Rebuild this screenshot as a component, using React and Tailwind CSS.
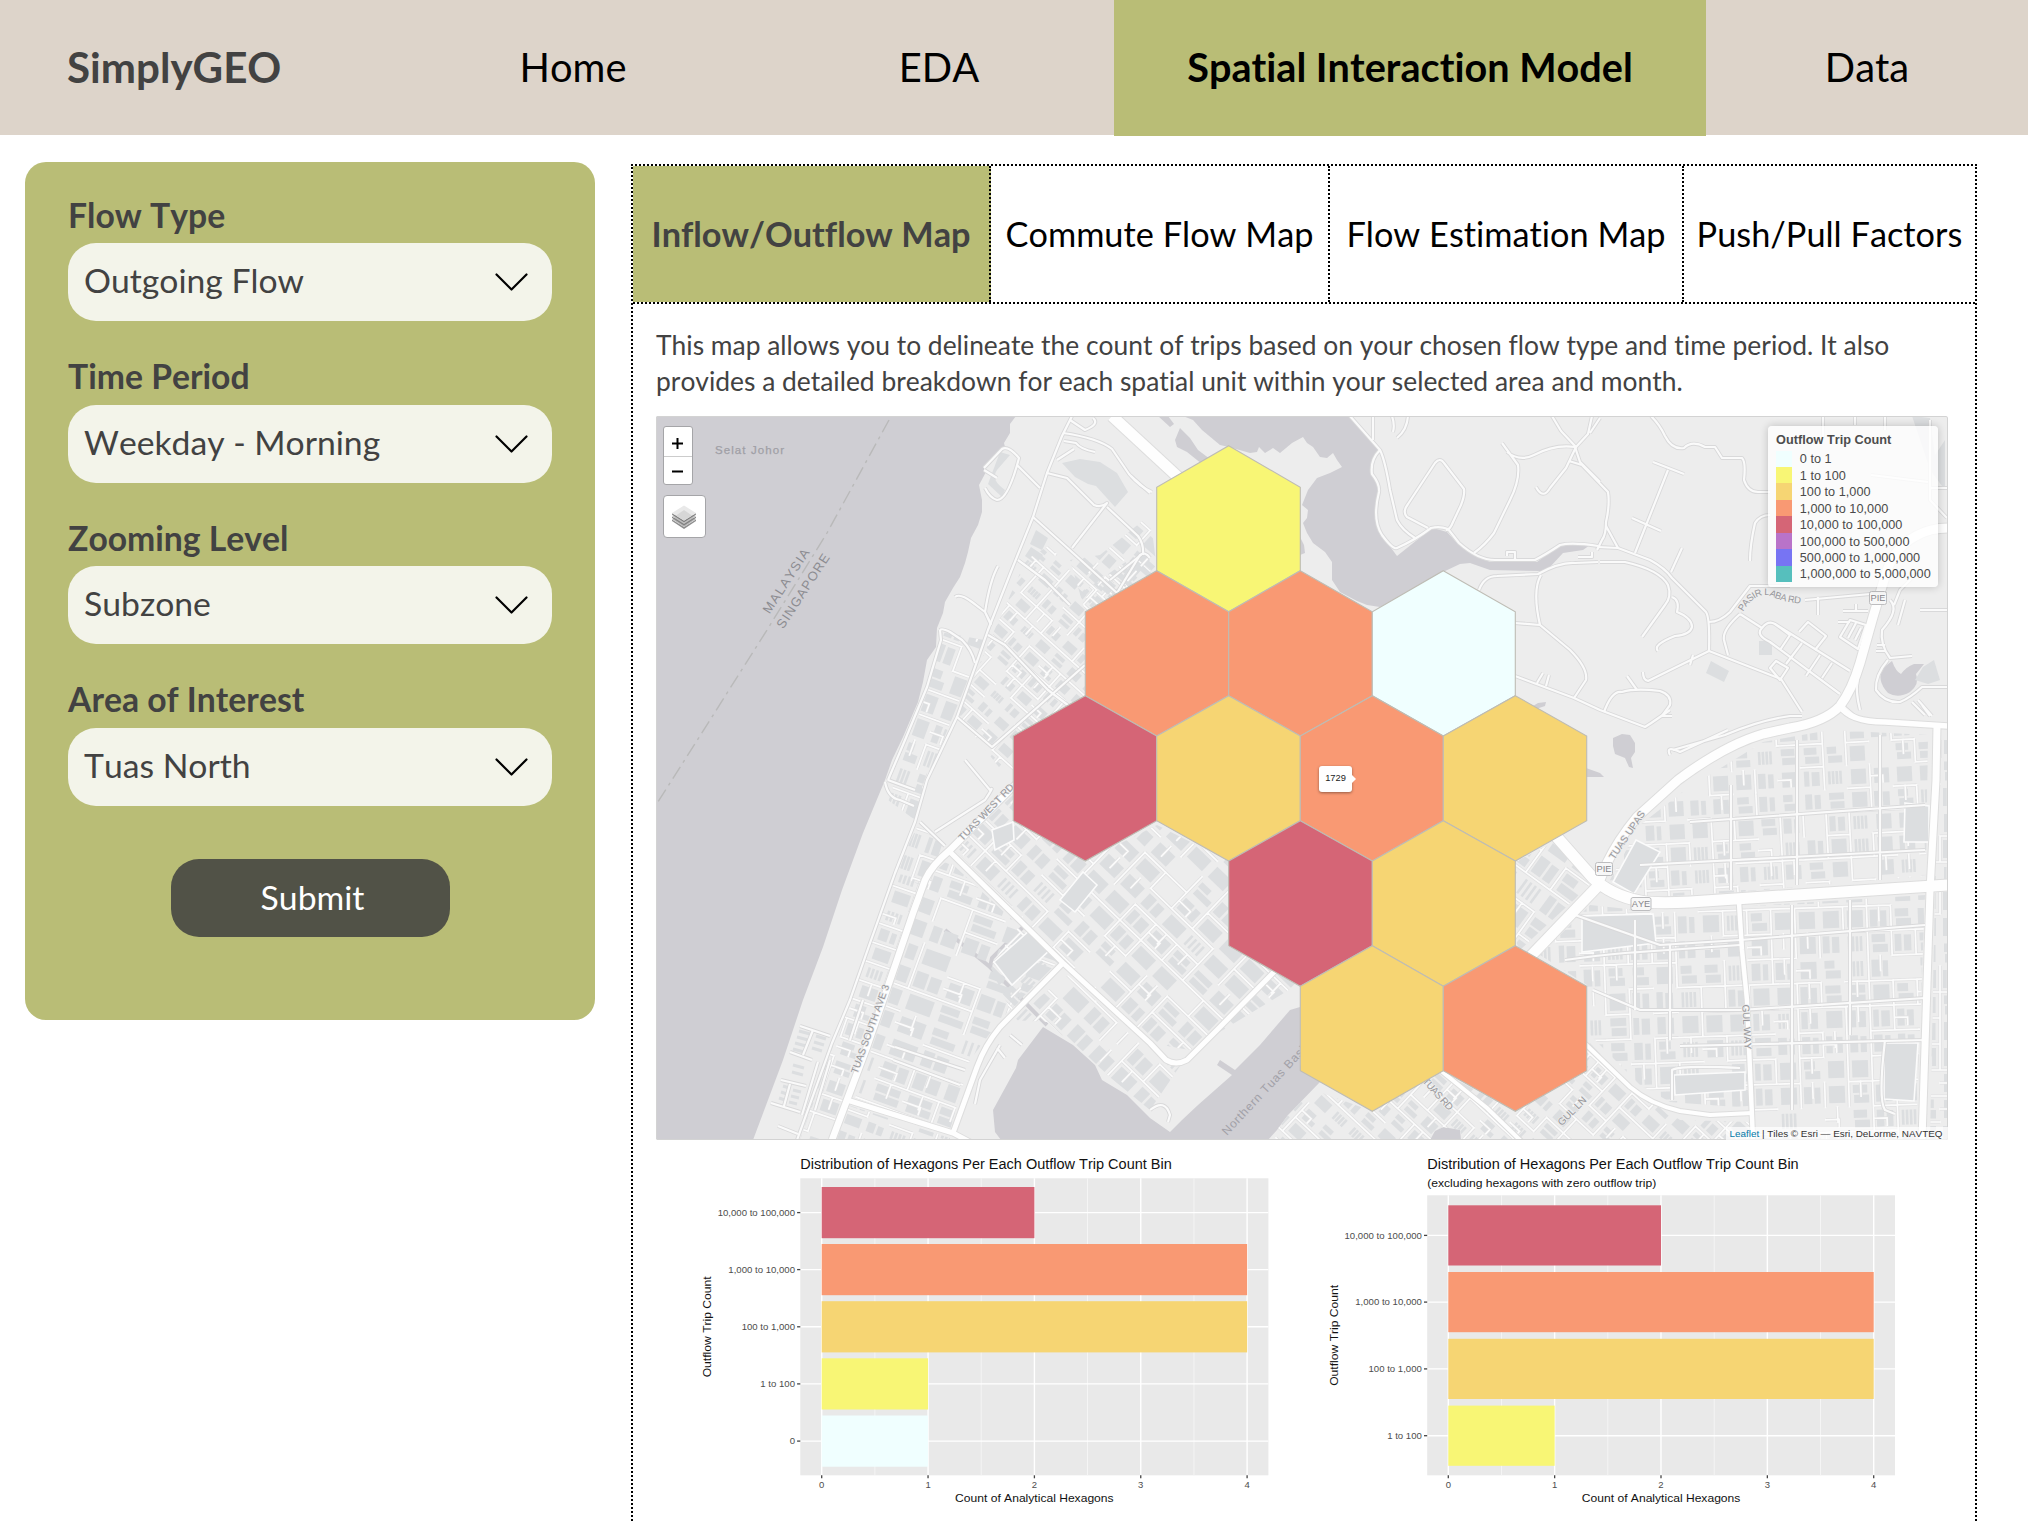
import React from "react";

const COLORS = {
  azure: "#f0ffff",
  yellow: "#f8f675",
  gold: "#f6d573",
  orange: "#f99973",
  rose: "#d56576",
  purple: "#b973c9",
  blue: "#7774f3",
  teal: "#56bfbd",
};

/* ---------- navigation ---------- */

function Nav() {
  return (
    <nav className="flex h-[135px] w-full shrink-0 bg-[#ddd4ca] text-[39.9px] leading-none text-black">
      <div className="flex w-[382px] items-center pb-[1px] pl-[67px] text-[42.1px] font-bold text-[#424242]">SimplyGEO</div>
      <div className="flex w-[382px] items-center justify-center pb-[1px]">Home</div>
      <div className="flex w-[350px] items-center justify-center pb-[1px]">EDA</div>
      <div className="flex h-[136px] w-[592px] items-center justify-center bg-[#b9bd76] pb-[2px] text-[39.6px] font-bold">
        Spatial Interaction Model
      </div>
      <div className="flex w-[322px] items-center justify-center pb-[1px]">Data</div>
    </nav>
  );
}

/* ---------- sidebar ---------- */

function Field({ label, value }) {
  return (
    <div className="flex h-[161.6px] flex-col">
      <div className="flex h-[49px] items-center pb-[6px] text-[33.7px] leading-none font-bold text-[#424242]">{label}</div>
      <div className="flex h-[78px] items-center justify-between rounded-[28px] bg-[#f3f4ea] pr-[24px] pl-4 text-[33.7px] leading-none text-[#424242]">
        <span className="pb-[2px]">{value}</span>
        <svg width="34" height="20" viewBox="0 0 34 20" fill="none" stroke="#000" strokeWidth="2.2" strokeLinecap="round" strokeLinejoin="round">
          <path d="M2.5 2.5 L17.5 17.5 L32.5 2.5" />
        </svg>
      </div>
    </div>
  );
}

function Sidebar() {
  return (
    <aside className="ml-[25px] mt-[27px] flex h-[858px] w-[570px] shrink-0 flex-col rounded-[21px] bg-[#b9bd76] px-[43px] pt-[32px]">
      <Field label="Flow Type" value="Outgoing Flow" />
      <Field label="Time Period" value="Weekday - Morning" />
      <Field label="Zooming Level" value="Subzone" />
      <Field label="Area of Interest" value="Tuas North" />
      <button className="mt-[18.6px] flex h-[78px] w-[279px] items-center justify-center self-center rounded-[28px] bg-[#515247] pb-[1px] pl-[5px] text-[33.7px] leading-none text-white">
        Submit
      </button>
    </aside>
  );
}

/* ---------- base map ---------- */

function rng(seed) {
  let s = seed;
  return () => {
    s = (s * 16807) % 2147483647;
    return s / 2147483647;
  };
}

const DISTRICTS = [
  { id: "a", poly: "1026,560 1050,545 1085,590 1150,545 1150,580 1085,620 1085,700 1013,740 1013,785 958,715 990,640", cx: 1045, cy: 660, r: 130, a: 42, w: 21, h: 17, seed: 11 },
  { id: "c", poly: "941,632 984,640 925,785 915,820 888,800 928,690", cx: 935, cy: 720, r: 110, a: 20, w: 24, h: 26, seed: 21 },
  { id: "d", poly: "895,873 925,880 830,1140 800,1140 832,1043 850,1000 870,943", cx: 860, cy: 980, r: 190, a: 19, w: 25, h: 20, seed: 35 },
  { id: "d2", poly: "918,825 945,845 920,885 895,873", cx: 920, cy: 855, r: 50, a: 19, w: 22, h: 24, seed: 39 },
  { id: "e", poly: "955,850 1013,795 1085,861 1157,825 1228,861 1228,946 1297,985 1190,1050 1150,1043 1065,960", cx: 1120, cy: 920, r: 180, a: 44, w: 29, h: 22, seed: 47 },
  { id: "e2", poly: "1068,975 1150,1050 1180,1066 1150,1110 1095,1065 1047,1022 1010,1020", cx: 1100, cy: 1040, r: 90, a: 44, w: 30, h: 24, seed: 53 },
  { id: "f", poly: "948,860 1058,962 1000,1020 970,1060 950,1130 855,1098 900,965 925,880", cx: 940, cy: 1000, r: 150, a: 20, w: 34, h: 24, seed: 61 },
  { id: "f2", poly: "1020,925 1060,962 1040,990 1010,1010 990,966", cx: 1025, cy: 965, r: 50, a: 45, w: 26, h: 20, seed: 67 },
  { id: "f3", poly: "845,1104 950,1138 950,1142 835,1142", cx: 890, cy: 1125, r: 70, a: 20, w: 24, h: 18, seed: 69 },
  { id: "g", poly: "1685,790 1763,742 1830,730 1928,735 1926,876 1740,892 1640,898 1610,880 1640,825", cx: 1780, cy: 815, r: 190, a: -3, w: 23, h: 23, seed: 71 },
  { id: "h", poly: "1590,905 1655,912 1925,895 1916,1140 1756,1140 1750,1108 1670,1102 1640,1085 1590,1035 1587,985 1540,955", cx: 1750, cy: 1010, r: 240, a: -2, w: 24, h: 25, seed: 83 },
  { id: "i", poly: "1300,1085 1372,1111 1440,1071 1515,1111 1587,1071 1587,1040 1640,1095 1680,1120 1752,1122 1752,1140 1463,1140 1460,1130 1443,1127 1435,1131 1430,1140 1267,1140 1277,1130 1288,1115 1320,1082", cx: 1500, cy: 1100, r: 260, a: 43, w: 23, h: 19, seed: 97 },
  { id: "j", poly: "1515,862 1558,840 1590,885 1520,950 1515,940", cx: 1550, cy: 890, r: 70, a: 36, w: 30, h: 27, seed: 103 },
  { id: "k", poly: "1938,740 1948,740 1948,1140 1930,1140", cx: 1940, cy: 940, r: 210, a: 0, w: 20, h: 26, seed: 109 },
  { id: "b", poly: "1070,560 1100,555 1150,515 1157,570 1085,611", cx: 1110, cy: 575, r: 60, a: 42, w: 34, h: 20, seed: 113 },
];

function District({ id, poly, cx, cy, r, a, w, h, seed }) {
  const rand = rng(seed * 7919);
  const blds = [];
  let roads = "";
  const nx = Math.ceil(r / w);
  const ny = Math.ceil(r / h);
  for (let i = -nx; i < nx; i++) {
    for (let j = -ny; j < ny; j++) {
      const x = i * w;
      const y = j * h;
      const k = rand();
      if (k < 0.32) {
        blds.push([x + 4, y + 4, w - 8, h - 8]);
      } else if (k < 0.62) {
        const s = (0.35 + rand() * 0.25) * (w - 7);
        blds.push([x + 3, y + 4, s - 1, h - 8]);
        blds.push([x + 4.5 + s, y + 5, w - 9 - s, h - 9]);
      } else if (k < 0.82) {
        const s = (h - 9) / 2;
        blds.push([x + 4, y + 3.5, (w - 8) * (0.6 + rand() * 0.4), s]);
        blds.push([x + 5, y + 5.5 + s, w - 9, s]);
      } else if (k < 0.93) {
        for (let m = 0; m < 4; m++) blds.push([x + 4 + (m * (w - 8)) / 4, y + 5, 2.6, h - 10]);
      }
      if (rand() < 0.6) roads += `M${x} ${y}h${w}`;
      if (rand() < 0.5) roads += `M${x} ${y}v${h}`;
      if (rand() < 0.22) roads += `M${x + w * 0.5} ${y}v${h * 0.6}`;
      if (rand() < 0.12) roads += `M${x} ${y + h * 0.5}h${w * 0.55}v${h * 0.3}`;
    }
  }
  return (
    <g clipPath={`url(#clip-${id})`}>
      <clipPath id={`clip-${id}`}>
        <polygon points={poly} />
      </clipPath>
      <g transform={`translate(${cx} ${cy}) rotate(${a})`}>
        {blds.map((b, n) => (
          <rect key={n} x={b[0]} y={b[1]} width={Math.max(b[2], 1)} height={Math.max(b[3], 1)} fill="#dcdee0" />
        ))}
        <path d={roads} stroke="#e0e0e1" strokeWidth="3.2" fill="none" />
        <path d={roads} stroke="#fbfbfb" strokeWidth="1.7" fill="none" strokeLinecap="square" />
      </g>
    </g>
  );
}

const MINOR = [
  // north-west
  "M1072 416L1062 436L1047 473L1033 517L1010 574L988 630L975 667L957 717L927 780L915 822L895 873L870 943L850 1000L832 1043L797 1140",
  "M940 630Q942 628 950 632L962 640Q972 650 975 663M940 630L941 640L927 687L905 740L888 780",
  "M1063 433Q1098 438 1112 449L1129 474Q1140 487 1152 492",
  "M1047 473L1067 478L1094 505Q1101 508 1107 503L1072 548M1107 507L1138 536Q1144 544 1143 555",
  "M1033 517L1073 553L1117 593M1018 560L1045 580L1070 605M1117 593L1140 555Q1145 551 1150 558",
  "M984 468L1002 449Q1008 445 1019 458Q1008 500 997 500Q990 498 985 488M984 470L997 478M1017 465L1040 488",
  "M998 566Q990 580 985 612L991 625M955 597Q960 593 972 602L985 612L991 624",
  "M1070 420L1085 430Q1100 424 1093 418M1064 441L1076 443Q1080 449 1095 452M1057 460L1074 449",
  "M988 635L1005 645L1048 690L1085 718M957 717L992 747L1040 705L1085 665",
  "M1131 476L1150 493M1110 580L1142 554",
  "M965 760L990 790Q995 785 985 800L935 832M920 822L945 846",
  "M885 782Q888 798 900 800L914 806M888 780L915 790",
  // waterfront sheds
  "M800 1026L830 1036M790 1052L812 1060M813 1030L803 1055M781 1080L806 1086M771 1103L800 1112M790 1084L784 1106M830 1060L815 1110M818 1062L802 1115",
  // north
  "M1350 416L1380 450Q1385 460 1390 490L1397 520Q1402 530 1415 538",
  "M1380 450Q1370 460 1372 474Q1380 484 1379 492Q1372 520 1382 535Q1393 550 1397 548Q1415 540 1431 528Q1440 526 1448 529L1459 543Q1478 560 1495 560H1535Q1545 555 1560 545Q1572 542 1598 546",
  "M1373 416V440M1392 416Q1395 425 1393 432M1408 416Q1407 430 1397 438",
  "M1428 528L1407 517Q1402 512 1408 504L1435 463Q1440 457 1444 463L1464 489Q1465 495 1461 505L1453 522Q1450 530 1446 530",
  "M1502 443L1518 465Q1520 480 1510 500L1494 533Q1485 545 1474 553M1507 452Q1520 462 1534 455Q1555 444 1575 447L1580 462L1600 482",
  "M1552 416L1561 431L1576 447L1588 434L1592 416M1576 447L1566 468L1550 488Q1543 500 1536 487M1600 418L1590 433M1569 461L1582 465",
  "M1479 590Q1484 576 1497 576L1538 574Q1560 562 1575 563L1598 562M1541 575Q1532 590 1540 625L1515 623M1540 625L1570 650Q1588 668 1586 680L1574 698",
  "M1515 676L1574 698L1600 710L1645 727Q1650 724 1670 710M1537 683L1543 673M1546 686L1549 675",
  "M1507 556V552H1515V559M1578 557H1592V552",
  // north-east
  "M1651 416Q1660 425 1665 436Q1672 450 1684 448Q1692 440 1705 447L1715 447L1722 458H1742Q1746 462 1744 480Q1748 492 1758 492H1770",
  "M1582 465L1608 492Q1610 505 1606 522Q1606 535 1602 540L1597 550M1606 526L1618 548",
  "M1598 547L1618 548L1650 560Q1665 568 1672 578L1706 612Q1710 618 1709 651M1600 562L1625 562Q1660 570 1668 585Q1672 597 1665 605L1642 637",
  "M1635 553L1668 470M1653 462L1684 474M1632 518L1661 531M1682 548L1671 572",
  "M1672 597Q1680 600 1677 612Q1692 618 1692 627Q1690 635 1675 636Q1652 645 1658 651",
  "M1709 622Q1720 622 1730 612L1750 586H1790M1805 600L1870 594M1740 614Q1722 630 1724 640L1728 655M1709 651L1781 679L1802 712M1709 651L1648 681Q1643 680 1643 672M1690 665L1693 655",
  "M1604 712Q1612 690 1622 692Q1635 688 1660 691Q1672 695 1670 705L1662 716H1672M1627 676L1637 690",
  "M1750 561Q1750 545 1755 523Q1760 515 1770 515M1740 614L1762 628Q1768 620 1775 624L1850 671M1762 628Q1755 635 1770 642L1840 694M1775 624L1790 635L1780 650M1802 643L1786 664M1820 655L1806 676M1832 663L1822 678",
  "M1799 632L1808 622L1826 636L1815 650M1770 668L1776 661L1788 668L1780 680Z",
  "M1818 597V615M1843 611H1868M1856 604V611M1840 637L1850 620L1866 625L1858 649Z M1838 622H1850M1848 638L1856 623M1855 640L1861 628",
  "M1890 600Q1900 610 1882 630Q1880 645 1890 658L1912 656M1894 605L1900 590L1920 570M1905 600L1898 625",
  "M1888 660Q1875 675 1876 690Q1885 703 1900 702Q1910 698 1922 687H1948M1912 702L1925 715M1918 700L1932 716M1922 705L1930 716M1877 645H1885M1876 651H1886",
  "M1823 416V440M1855 416V425M1885 416V430M1930 420V500L1947 518M1871 475L1928 482M1930 488H1948M1920 610H1948",
  "M1673 750L1725 735Q1760 720 1790 716L1802 716M1670 755Q1665 745 1680 752L1728 730",
  "M1860 710Q1855 690 1858 680M1843 706L1857 718",
  // south
  "M975 1104L980 1080L1000 1045M1010 1035L1022 1045M997 1048L1005 1058M1150 1110Q1165 1098 1170 1115L1168 1122",
  "M863 1000L850 1040M895 1047L965 1070M893 1060L960 1085M778 1126L798 1134",
  "M1580 905L1575 915L1660 945L1740 940L1925 925M1565 960Q1600 955 1625 953L1740 945",
  "M1593 990L1640 1010H1740L1925 998M1680 1046L1925 1040M1672 1100V1070Q1680 1065 1740 1068",
  "M1640 865L1925 850M1690 822L1925 805M1731 785V890M1797 740V885M1880 735V880M1635 920V1010M1670 945V1040M1792 905V1110M1850 900V1035M1885 1040Q1878 1100 1885 1110L1895 1114",
];

const MAJOR = [
  ["M832 1140L847 1100L867 1047L897 960L913 913L925 880Q932 865 950 850L1030 770", 6.5],
  ["M950 852L1063 963L1150 1043L1166 1060Q1176 1066 1187 1060L1217 1030L1273 973L1300 945", 5],
  ["M1063 963L1000 1027Q985 1045 977 1067L953 1133M847 1100L953 1133L970 1142", 5],
  ["M1948 528Q1930 528 1916 536Q1892 548 1884 580L1873 617L1860 663Q1852 690 1840 706Q1825 722 1790 728L1763 734Q1725 745 1678 780L1637 817Q1618 840 1607 863L1597 887", 9],
  ["M1840 706Q1850 722 1885 722L1948 726", 5.5],
  ["M1555 835L1593 878Q1610 895 1640 901Q1655 904 1690 902L1750 898L1948 885", 11],
  ["M1597 887L1525 962", 10.5],
  ["M1937 725L1936 780L1930 890L1922 1140", 7],
  ["M1739 903L1742 950L1747 1000L1753 1140", 4.5],
  ["M1575 1034L1630 1087Q1650 1104 1680 1111L1710 1115L1752 1113M1440 1070L1487 1108L1522 1142", 4],
  ["M1112 416L1178 477", 11],
];

const COLS = [1013.3, 1085.3, 1156.7, 1228.7, 1300.3, 1372.3, 1443.3, 1515.3, 1586.7];
const ROWS = [
  [445.7, 487.3, 570.7, 611.7],
  [570.7, 611.7, 695.7, 736],
  [695.7, 736, 820.7, 861],
  [820.7, 861, 945.7, 986.3],
  [945.7, 986.3, 1070.7, 1111.3],
];
const HEXES = [
  [3, 0, COLORS.yellow],
  [2, 1, COLORS.orange],
  [4, 1, COLORS.orange],
  [6, 1, COLORS.azure],
  [1, 2, COLORS.rose],
  [3, 2, COLORS.gold],
  [5, 2, COLORS.orange],
  [7, 2, COLORS.gold],
  [4, 3, COLORS.rose],
  [6, 3, COLORS.gold],
  [5, 4, COLORS.gold],
  [7, 4, COLORS.orange],
];

function MapLabel({ x, y, a = 0, len, size = 10, fill = "#97979b", halo = "#ededed", children }) {
  return (
    <text
      transform={`translate(${x} ${y}) rotate(${a})`}
      textAnchor="middle"
      dominantBaseline="central"
      fontSize={size}
      textLength={len}
      fill={fill}
      stroke={halo}
      strokeWidth="1.5"
      paintOrder="stroke"
    >
      {children}
    </text>
  );
}

function Shield({ x, y, w, children }) {
  return (
    <g>
      <rect x={x - w / 2} y={y - 6.5} width={w} height="13" rx="2" fill="#f7f7f7" stroke="#bdbdbf" strokeWidth="1" />
      <text x={x} y={y + 3.3} textAnchor="middle" fontSize="9.3" fill="#85858a">
        {children}
      </text>
    </g>
  );
}

function BaseMap() {
  return (
    <svg className="block h-full w-full" viewBox="656 416 1292 724" fontFamily="'Liberation Sans', Arial, sans-serif">
      <rect x="656" y="416" width="1292" height="724" fill="#ededed" />
      <g fill="#cfced3">
        <path d="M656 416H1016L1010 424V433L1004 443L1005 447L984 468L986 472L979 485L982 500L982 512L978 525L971 538L968 552L965 563L960 577L953 588L945 602L943 613L937 628L936 647L927 660L923 682L918 702L903 737L892 760L885 780L863 833L842 890L823 947L803 1000L783 1060L753 1140H656Z" />
        <path d="M1183 416L1193 420L1202 430L1220 445L1229 447L1250 453L1257 452L1259 447L1265 453L1273 448L1280 453L1292 443L1303 437L1307 443L1313 447L1320 457L1327 458L1333 453L1337 460L1342 467L1330 473L1317 478L1308 490L1302 505L1308 510L1307 518L1303 523L1307 533L1313 543L1325 552L1332 562V580L1340 592L1357 601L1367 605L1380 607L1390 602L1443 572L1460 564L1470 563L1490 570L1542 571L1550 567L1563 553L1583 550L1590 545L1563 545L1553 550L1537 562H1490L1470 553L1457 543L1447 532L1433 528L1417 540L1397 556L1383 537L1377 525V503L1380 490L1378 482L1371 473L1372 463L1380 450L1370 440L1350 416Z" />
        <path d="M1175 440L1180 428L1190 438L1198 450L1210 459L1202 464L1187 452L1177 447ZM1158 416H1168L1174 424L1170 427Z" />
        <path d="M1300 537L1304 545L1305 553L1300 555ZM1533 706L1538 703L1546 702L1545 706L1536 709ZM1586 768L1600 773L1604 777L1586 777Z" />
        <path d="M1043 1027L1018 1060L1016 1068L993 1110L995 1132L1001 1140H1268L1277 1130L1288 1115L1320 1082L1300 1065V1007L1290 1010L1260 1045L1235 1070L1220 1060L1217 1065L1232 1075L1198 1105L1182 1120L1170 1132L1150 1118L1127 1095L1102 1080L1095 1065L1073 1045Z" />
        <path d="M1430 1140L1435 1131L1443 1127L1460 1130L1461 1140Z" />
        <path d="M1613 738L1622 734L1630 735L1635 743L1635 752L1631 758L1633 768L1629 767L1625 758L1615 754L1613 746Z" />
        <path d="M1883 668L1892 661Q1896 672 1901 674Q1906 667 1914 664L1924 664L1916 674Q1920 684 1910 692Q1898 699 1888 693Q1876 680 1883 668Z" />
      </g>
      <path d="M945 930L990 967L1047 1025M990 967L992 958L1023 927" stroke="#cfced3" strokeWidth="4" fill="none" />
      <g fill="#dcdee0">
        <path d="M1062 463L1080 459L1100 462L1117 473L1128 492L1115 507L1096 486L1088 484L1075 477Z" />
        <path d="M1000 452L1010 455L997 470Q990 480 1005 490L1002 497L988 484Z M1036 530L1048 538L1042 550L1030 544Z M1031 547L1043 555L1036 564L1025 556Z" />
        <path d="M1134 560L1143 553L1150 560L1128 585L1118 583Z M1759 641H1772V655H1759Z M1711 661L1729 671L1724 682L1706 673Z" />
        <path d="M1923 667L1934 660L1940 680L1928 684L1915 680Z M1912 416L1930 418L1935 455L1945 440V490L1930 470Z" />
      </g>
      <g stroke="#dcdee0" strokeWidth="3" fill="none">
        <path d="M799 1031L810 1034M797 1037L808 1040M795 1043L806 1046M793 1049L804 1052M816 1036L826 1039M814 1042L824 1045M812 1048L822 1051" />
        <path d="M783 1086L789 1088M781 1092L787 1094M779 1098L785 1100M793 1090L801 1092M791 1096L799 1098M789 1102L797 1104M793 1065L804 1068M792 1072L803 1075" />
      </g>
      {DISTRICTS.map((d) => (
        <District key={d.id} {...d} />
      ))}
      <g fill="#dcdee0" stroke="#fbfbfb" strokeWidth="1.6">
        <path d="M1582 916L1653 914L1656 943L1582 952Z" />
        <path d="M1636 840L1660 852L1634 894L1613 882Z" />
        <path d="M1884 1043H1918L1914 1101L1884 1099Z" />
        <path d="M1674 1075L1745 1072V1090L1675 1095Z" />
        <path d="M1905 803L1929 806V842H1904Z" />
        <path d="M992 830L1013 822L1014 840L995 850Z" />
        <path d="M1083 872L1097 885L1075 912L1060 900Z" />
        <path d="M994 962L1030 930L1052 948L1012 985Z" />
      </g>
      <g fill="none" strokeLinejoin="round">
        <g stroke="#d9d9da" strokeWidth="4">
          {MINOR.map((d, i) => (
            <path key={i} d={d} />
          ))}
        </g>
        {MAJOR.map(([d, w], i) => (
          <path key={i} d={d} stroke="#dddddd" strokeWidth={w + 2} />
        ))}
        <g stroke="#fafafa" strokeWidth="2.2">
          {MINOR.map((d, i) => (
            <path key={i} d={d} />
          ))}
        </g>
        {MAJOR.map(([d, w], i) => (
          <path key={i} d={d} stroke="#fefefe" strokeWidth={w} />
        ))}
        <path d="M889 420L827 533L767 630L672 780L656 805" stroke="#b9b9b9" strokeWidth="1.4" strokeDasharray="14 5 3 5" />
      </g>

      <text x="715" y="454" fontSize="11.5" fill="#a09fa6" stroke="#a09fa6" strokeWidth="0.25" textLength="69">Selat Johor</text>
      <MapLabel x={786} y={581} a={-57} len={74} size={13} fill="#8c8c91" halo="#cfced3">MALAYSIA</MapLabel>
      <MapLabel x={803} y={591} a={-57} len={86} size={13} fill="#8c8c91" halo="#cfced3">SINGAPORE</MapLabel>
      <MapLabel x={986} y={812} a={-46} len={75} size={10}>TUAS WEST RD</MapLabel>
      <MapLabel x={870} y={1029} a={-70} len={94} size={10}>TUAS SOUTH AVE 3</MapLabel>
      <text transform="translate(1227 1136) rotate(-47)" fontSize="12" fill="#a2a1a8" textLength="124">Northern Tuas Basin</text>
      <MapLabel x={1438} y={1094} a={48} len={40} size={10}>TUAS RD</MapLabel>
      <MapLabel x={1572} y={1111} a={-45} len={36} size={10}>GUL LN</MapLabel>
      <MapLabel x={1627} y={835} a={-56} len={56} size={10}>TUAS UPAS</MapLabel>
      <MapLabel x={1747} y={1027} a={87} len={45} size={10}>GUL WAY</MapLabel>
      <path id="laba" d="M1743 612Q1753 594 1768 595Q1785 603 1806 604" fill="none" />
      <text fontSize="9.5" fill="#97979b" stroke="#ededed" strokeWidth="1.5" paintOrder="stroke">
        <textPath href="#laba" textLength="66">PASIR LABA RD</textPath>
      </text>
      <Shield x={1604} y={869} w={17}>PIE</Shield>
      <Shield x={1641} y={904} w={20}>AYE</Shield>
      <Shield x={1878} y={598} w={17}>PIE</Shield>

      {HEXES.map(([c, r, fill], i) => {
        const [t, u, l, b] = ROWS[r];
        const x0 = COLS[c - 1];
        const x1 = COLS[c];
        const x2 = COLS[c + 1];
        return (
          <polygon
            key={i}
            points={`${x1},${t} ${x2},${u} ${x2},${l} ${x1},${b} ${x0},${l} ${x0},${u}`}
            fill={fill}
            stroke="#bebcb4"
            strokeWidth="1.1"
          />
        );
      })}
    </svg>
  );
}

const LEGEND = [
  ["0 to 1", "bg-[#f0ffff]"],
  ["1 to 100", "bg-[#f8f675]"],
  ["100 to 1,000", "bg-[#f6d573]"],
  ["1,000 to 10,000", "bg-[#f99973]"],
  ["10,000 to 100,000", "bg-[#d56576]"],
  ["100,000 to 500,000", "bg-[#b973c9]"],
  ["500,000 to 1,000,000", "bg-[#7774f3]"],
  ["1,000,000 to 5,000,000", "bg-[#56bfbd]"],
];

function MapPanel() {
  return (
    <div className="relative h-[724px] w-[1292px] shrink-0 overflow-hidden rounded-[2px] font-['Liberation_Sans',Arial,sans-serif]">
      <BaseMap />
      <div className="pointer-events-none absolute inset-0 rounded-[2px] border border-[#d3d3d3]" />

      <div className="absolute top-[10px] left-[6.5px] flex h-[59px] w-[30.5px] flex-col overflow-hidden rounded-[3px] border border-[#a5a5a8] bg-white">
        <div className="flex flex-1 items-center justify-center border-b border-[#cccccc] pt-1">
          <svg width="13" height="13" viewBox="0 0 13 13" stroke="#000" strokeWidth="2">
            <path d="M6.5 1V12M1 6.5H12" />
          </svg>
        </div>
        <div className="flex flex-1 items-center justify-center pt-[2px]">
          <svg width="13" height="13" viewBox="0 0 13 13" stroke="#000" strokeWidth="2">
            <path d="M1 6.5H12" />
          </svg>
        </div>
      </div>
      <div className="absolute top-[79px] left-[6.5px] flex h-[43px] w-[43px] items-center justify-center rounded-[4px] border border-[#a5a5a8] bg-white">
        <svg width="26" height="26" viewBox="0 0 26 26">
          <path d="M1 15.5L13 23L25 15.5V17L13 25L1 17Z" fill="#8d8d8d" />
          <path d="M1 15L13 8L25 15L13 23Z" fill="#b4b4b4" />
          <path d="M1 12.5L13 20L25 12.5V13.8L13 21.5L1 13.8Z" fill="#818181" />
          <path d="M1 12L13 5L25 12L13 19.5Z" fill="#c0c0c0" />
          <path d="M1 9.3L13 16.8L25 9.3V10.6L13 18.3L1 10.6Z" fill="#7e7e7e" />
          <path d="M1 9L13 1.5L25 9L13 16.5Z" fill="#e9e9e9" />
          <path d="M5 11.5L13 6L21 11.5L13 16.5Z" fill="#d6d6d6" />
        </svg>
      </div>

      <div className="absolute top-[10px] left-[1112px] h-[161px] w-[170px] rounded-[4px] bg-white/80 px-[8px] pt-[6px] text-[12.7px] leading-none tracking-[0.02px] text-[#4a4a4a] shadow-[0_0_9px_rgba(0,0,0,0.2)]">
        <div className="flex h-[18.5px] items-center pb-[2px] text-[12.7px] font-bold whitespace-nowrap text-[#4d4d4d]">Outflow Trip Count</div>
        {LEGEND.map(([label, cls]) => (
          <div key={label} className="flex h-[16.45px] items-center whitespace-nowrap">
            <span className={`mr-[7.5px] h-full w-[16.3px] shrink-0 ${cls}`} />
            <span className="pt-[2px]">{label}</span>
          </div>
        ))}
      </div>

      <div className="absolute top-[349.5px] left-[663px] flex h-[26px] w-[33px] items-center justify-center rounded-[3px] bg-white text-[9.3px] leading-none text-[#222] shadow-[0_1px_3px_rgba(0,0,0,0.4)]">
        1729
        <svg className="absolute top-[9px] left-[33px]" width="4" height="8" viewBox="0 0 4 8">
          <path d="M0 0L4 4L0 8Z" fill="#fff" />
        </svg>
      </div>

      <div className="absolute right-0 bottom-0 flex h-[13px] w-[222px] items-center justify-center bg-white/70 pr-[2px] text-[9.9px] leading-none whitespace-pre text-[#333]">
        <span className="text-[#0078a8]">Leaflet</span> | Tiles © Esri — Esri, DeLorme, NAVTEQ
      </div>
    </div>
  );
}

/* ---------- bar charts ---------- */

function Chart({ left, width, x0, x1, top, zero, step, bars, yTitleX, subtitle }) {
  const bottom = 1475.3;
  const mid = (top + bottom) / 2;
  return (
    <svg
      className="block shrink-0"
      width={width}
      height="381"
      viewBox={`${left} 1140 ${width} 381`}
      fontFamily="'Liberation Sans', Arial, sans-serif"
    >
      <text x={x0} y="1169" fontSize="14" fill="#111" textLength="371.5" lengthAdjust="spacingAndGlyphs">
        Distribution of Hexagons Per Each Outflow Trip Count Bin
      </text>
      {subtitle && (
        <text x={x0} y="1187" fontSize="11.6" fill="#111" textLength="229" lengthAdjust="spacingAndGlyphs">
          {subtitle}
        </text>
      )}
      <rect x={x0} y={top} width={x1 - x0} height={bottom - top} fill="#e9e9e9" />
      {[0, 1, 2, 3].map((n) => (
        <line key={n} x1={zero + (n + 0.5) * step} x2={zero + (n + 0.5) * step} y1={top} y2={bottom} stroke="#f6f6f6" strokeWidth="0.9" />
      ))}
      {[0, 1, 2, 3, 4].map((n) => (
        <g key={n}>
          <line x1={zero + n * step} x2={zero + n * step} y1={top} y2={bottom} stroke="#fff" strokeWidth="1.4" />
          <line x1={zero + n * step} x2={zero + n * step} y1={bottom} y2={bottom + 3} stroke="#444" strokeWidth="1.3" />
          <text x={zero + n * step} y="1488" textAnchor="middle" fontSize="9.5" fill="#4d4d4d">
            {n}
          </text>
        </g>
      ))}
      {bars.map(([label, y, h, v, fill]) => (
        <g key={label}>
          <line x1={x0} x2={x1} y1={y + h / 2} y2={y + h / 2} stroke="#fff" strokeWidth="1.4" />
          <line x1={x0 - 3.2} x2={x0} y1={y + h / 2} y2={y + h / 2} stroke="#444" strokeWidth="1.3" />
          <text x={x0 - 5.3} y={y + h / 2 + 3.3} textAnchor="end" fontSize="9.6" fill="#4d4d4d">
            {label}
          </text>
          <rect x={zero} y={y} width={v * step} height={h} fill={fill} />
        </g>
      ))}
      <text x={(x0 + x1) / 2} y="1502" textAnchor="middle" fontSize="11.6" fill="#111" textLength="158.5" lengthAdjust="spacingAndGlyphs">
        Count of Analytical Hexagons
      </text>
      <text
        transform={`translate(${yTitleX} ${mid}) rotate(-90)`}
        textAnchor="middle"
        fontSize="11.6"
        fill="#111"
        textLength="101"
        lengthAdjust="spacingAndGlyphs"
      >
        Outflow Trip Count
      </text>
    </svg>
  );
}

function Charts() {
  return (
    <div className="flex w-[1292px]">
      <Chart
        left={656}
        width={646}
        x0={800.3}
        x1={1268.4}
        top={1178.3}
        zero={821.7}
        step={106.35}
        yTitleX={711}
        bars={[
          ["10,000 to 100,000", 1187, 51.2, 2, COLORS.rose],
          ["1,000 to 10,000", 1244, 51.2, 4, COLORS.orange],
          ["100 to 1,000", 1301.2, 51.2, 4, COLORS.gold],
          ["1 to 100", 1358.3, 51.2, 1, COLORS.yellow],
          ["0", 1415.5, 51.2, 1, COLORS.azure],
        ]}
      />
      <Chart
        left={1302}
        width={646}
        x0={1427.2}
        x1={1895}
        top={1195.3}
        zero={1448.3}
        step={106.35}
        yTitleX={1338}
        subtitle="(excluding hexagons with zero outflow trip)"
        bars={[
          ["10,000 to 100,000", 1205.3, 60.2, 2, COLORS.rose],
          ["1,000 to 10,000", 1272, 60.2, 4, COLORS.orange],
          ["100 to 1,000", 1338.8, 60.2, 4, COLORS.gold],
          ["1 to 100", 1405.6, 60.2, 1, COLORS.yellow],
        ]}
      />
    </div>
  );
}

/* ---------- main panel ---------- */

function Main() {
  return (
    <main className="ml-[36px] mt-[29px] flex h-[1400px] w-[1346px] shrink-0 flex-col border-2 border-dotted border-black">
      <div className="flex h-[138px] shrink-0 border-b-2 border-dotted border-black text-[34.3px] leading-none whitespace-nowrap text-black">
        <div className="flex w-[358px] items-center justify-center border-r-2 border-dotted border-black bg-[#b9bd76] font-bold text-[#424242]">
          Inflow/Outflow Map
        </div>
        <div className="flex w-[339px] items-center justify-center border-r-2 border-dotted border-black">Commute Flow Map</div>
        <div className="flex w-[354px] items-center justify-center border-r-2 border-dotted border-black">Flow Estimation Map</div>
        <div className="flex flex-1 items-center justify-center">Push/Pull Factors</div>
      </div>
      <div className="flex flex-col pt-[23px] pl-[23px]">
        <p className="h-[89px] text-[26.4px] leading-[36.3px] whitespace-nowrap text-[#424242]">
          This map allows you to delineate the count of trips based on your chosen flow type and time period. It also
          <br />
          provides a detailed breakdown for each spatial unit within your selected area and month.
        </p>
        <MapPanel />
        <Charts />
      </div>
    </main>
  );
}

export default function App() {
  return (
    <div className="flex h-[1521px] w-[2028px] flex-col overflow-hidden bg-white font-['Lato',sans-serif] [font-kerning:none] [font-variant-ligatures:none]">
      <Nav />
      <div className="flex items-start">
        <Sidebar />
        <Main />
      </div>
    </div>
  );
}
